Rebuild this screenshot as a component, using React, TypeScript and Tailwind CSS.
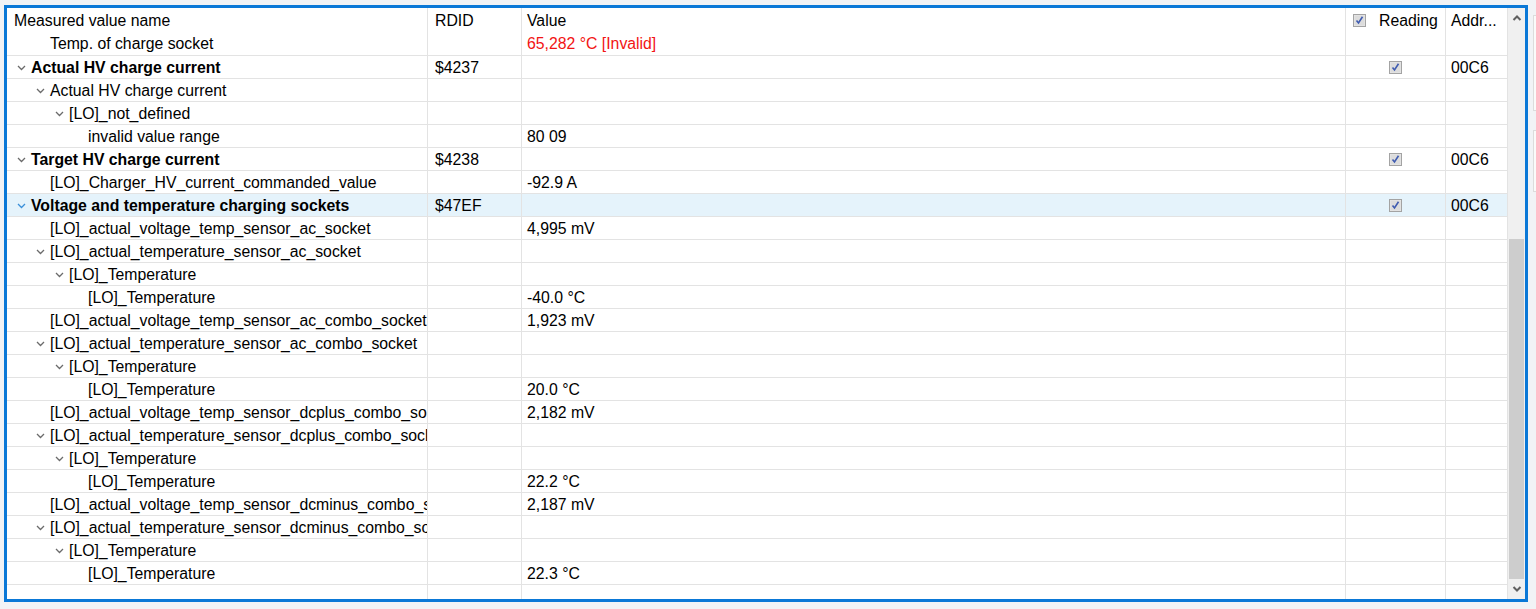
import React from "react";

type Row = {
  name: string;
  level: number;
  chevron?: boolean;
  bold?: boolean;
  rdid?: string;
  value?: string;
  red?: boolean;
  check?: boolean;
  addr?: string;
  selected?: boolean;
};

const rows: Row[] = [
  { name: "Temp. of charge socket", level: 1, value: "65,282 °C [Invalid]", red: true },
  { name: "Actual HV charge current", level: 0, chevron: true, bold: true, rdid: "$4237", check: true, addr: "00C6" },
  { name: "Actual HV charge current", level: 1, chevron: true },
  { name: "[LO]_not_defined", level: 2, chevron: true },
  { name: "invalid value range", level: 3, value: "80 09" },
  { name: "Target HV charge current", level: 0, chevron: true, bold: true, rdid: "$4238", check: true, addr: "00C6" },
  { name: "[LO]_Charger_HV_current_commanded_value", level: 1, value: "-92.9 A" },
  { name: "Voltage and temperature charging sockets", level: 0, chevron: true, bold: true, rdid: "$47EF", check: true, addr: "00C6", selected: true },
  { name: "[LO]_actual_voltage_temp_sensor_ac_socket", level: 1, value: "4,995 mV" },
  { name: "[LO]_actual_temperature_sensor_ac_socket", level: 1, chevron: true },
  { name: "[LO]_Temperature", level: 2, chevron: true },
  { name: "[LO]_Temperature", level: 3, value: "-40.0 °C" },
  { name: "[LO]_actual_voltage_temp_sensor_ac_combo_socket", level: 1, value: "1,923 mV" },
  { name: "[LO]_actual_temperature_sensor_ac_combo_socket", level: 1, chevron: true },
  { name: "[LO]_Temperature", level: 2, chevron: true },
  { name: "[LO]_Temperature", level: 3, value: "20.0 °C" },
  { name: "[LO]_actual_voltage_temp_sensor_dcplus_combo_socket", level: 1, value: "2,182 mV" },
  { name: "[LO]_actual_temperature_sensor_dcplus_combo_socket", level: 1, chevron: true },
  { name: "[LO]_Temperature", level: 2, chevron: true },
  { name: "[LO]_Temperature", level: 3, value: "22.2 °C" },
  { name: "[LO]_actual_voltage_temp_sensor_dcminus_combo_socket", level: 1, value: "2,187 mV" },
  { name: "[LO]_actual_temperature_sensor_dcminus_combo_socket", level: 1, chevron: true },
  { name: "[LO]_Temperature", level: 2, chevron: true },
  { name: "[LO]_Temperature", level: 3, value: "22.3 °C" },
];

const indents = ["pl-[7px]", "pl-[26px]", "pl-[45px]", "pl-[64px]"];

function Chevron({ blue }: { blue?: boolean }) {
  return (
    <svg width="17" height="10" viewBox="0 0 17 10" className="shrink-0">
      <polyline points="4,3 7.5,6.5 11,3" fill="none" stroke={blue ? "#3a8fd9" : "#6b6b6b"} strokeWidth="1.3" />
    </svg>
  );
}

function Check() {
  return (
    <svg width="13" height="13" viewBox="0 0 13 13">
      <rect x="0.5" y="0.5" width="12" height="12" fill="#e8e8e8" stroke="#a3a3a3" />
      <rect x="1.5" y="1.5" width="10" height="10" fill="#dcdcdc" />
      <polyline points="3.5,6.5 5.5,9 9.5,2.8" fill="none" stroke="#3f5bb0" strokeWidth="1.6" />
    </svg>
  );
}

function Cell({ w, children, className = "" }: { w: string; children?: React.ReactNode; className?: string }) {
  return <div className={`${w} shrink-0 h-full border-r border-[#e3e3e3] flex items-center overflow-hidden whitespace-nowrap pt-[1px] ${className}`}>{children}</div>;
}

export default function App() {
  return (
    <div className="w-[1536px] h-[609px] bg-[#f1f3f6] relative overflow-hidden text-[15.8px] text-black" style={{ fontFamily: '"Liberation Sans", Arial, sans-serif' }}>
      <div className="absolute left-[1533px] top-[15px] w-[20px] h-[96px] bg-[#fafafa] border border-[#dcdcdc]" />
      <div className="absolute left-[1533px] top-[130px] w-[20px] h-[62px] bg-[#fafafa] border border-[#dcdcdc]" />
      <div className="ml-[4px] mt-[5px] w-[1524px] h-[597px] border-[3px] border-[#0a78d7] bg-white flex">
        <div className="flex-1 flex flex-col overflow-hidden">
          {/* header */}
          <div className="h-[24px] flex shrink-0">
            <Cell w="w-[421px]" className="pl-[7px]">Measured value name</Cell>
            <Cell w="w-[94px]" className="pl-[7px]">RDID</Cell>
            <Cell w="w-[824px]" className="pl-[5px]">Value</Cell>
            <Cell w="w-[100px]" className="pl-[7px] gap-[13px]">
              <Check />
              <span>Reading</span>
            </Cell>
            <Cell w="w-[60px]" className="pl-[5px] border-r-0">Addr...</Cell>
          </div>
          {rows.map((r, i) => (
            <div key={i} className={`flex shrink-0 border-b border-[#e3e3e3] ${i === 0 ? "h-[24px]" : "h-[23px]"} ${r.selected ? "bg-[#e5f3fb]" : ""}`}>
              <Cell w="w-[421px]" className={indents[r.level]}>
                {r.chevron ? <Chevron blue={r.selected} /> : <span className="w-[17px] shrink-0" />}
                <span className={r.bold ? "font-bold" : ""}>{r.name}</span>
              </Cell>
              <Cell w="w-[94px]" className="pl-[7px]">{r.rdid}</Cell>
              <Cell w="w-[824px]" className={`pl-[5px] ${r.red ? "text-[#f21414]" : ""}`}>{r.value}</Cell>
              <Cell w="w-[100px]" className="justify-center">{r.check ? <Check /> : null}</Cell>
              <Cell w="w-[60px]" className="pl-[5px] border-r-0">{r.addr}</Cell>
            </div>
          ))}
          <div className="h-[23px] flex shrink-0">
            <Cell w="w-[421px]" />
            <Cell w="w-[94px]" />
            <Cell w="w-[824px]" />
            <Cell w="w-[100px]" />
            <Cell w="w-[60px]" className="border-r-0" />
          </div>
        </div>
        {/* scrollbar */}
        <div className="w-[18px] shrink-0 bg-[#f0f0f0] border-l border-[#e3e3e3] flex flex-col items-center">
          <div className="h-[20px] flex items-center justify-center shrink-0">
            <svg width="10" height="8" viewBox="0 0 10 8">
              <polyline points="1.5,6 5,2.5 8.5,6" fill="none" stroke="#606060" strokeWidth="2" />
            </svg>
          </div>
          <div className="h-[211px] shrink-0" />
          <div className="w-[15px] flex-1 bg-[#cdcdcd]" />
          <div className="h-[20px] flex items-center justify-center shrink-0">
            <svg width="10" height="8" viewBox="0 0 10 8">
              <polyline points="1.5,2 5,5.5 8.5,2" fill="none" stroke="#606060" strokeWidth="2" />
            </svg>
          </div>
        </div>
      </div>
    </div>
  );
}
